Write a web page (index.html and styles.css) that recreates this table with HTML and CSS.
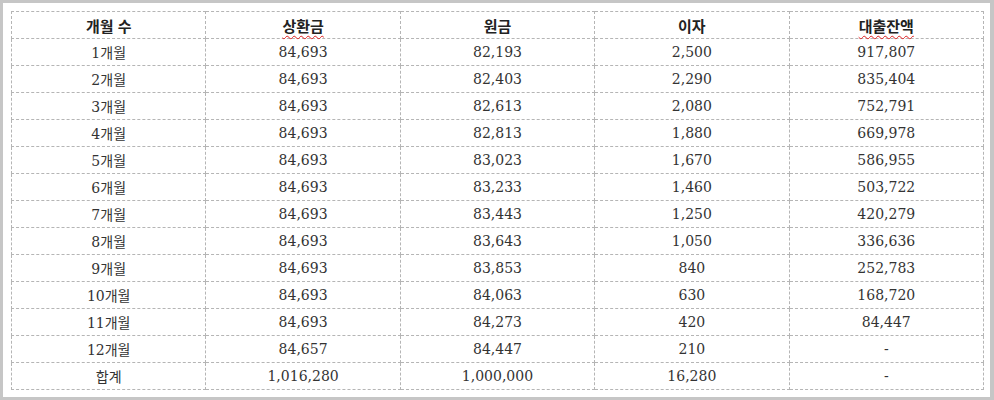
FILE: index.html
```html
<!DOCTYPE html>
<html lang="ko">
<head>
<meta charset="utf-8">
<link rel="stylesheet" href="styles.css">
</head>
<body>
<div class="frame">
<table class="loan">
<thead>
<tr><th>개월 수</th><th><span class="spell">상환금</span></th><th>원금</th><th>이자</th><th><span class="spell">대출잔액</span></th></tr>
</thead>
<tbody>
<tr><td>1개월</td><td>84,693</td><td>82,193</td><td>2,500</td><td>917,807</td></tr>
<tr><td>2개월</td><td>84,693</td><td>82,403</td><td>2,290</td><td>835,404</td></tr>
<tr><td>3개월</td><td>84,693</td><td>82,613</td><td>2,080</td><td>752,791</td></tr>
<tr><td>4개월</td><td>84,693</td><td>82,813</td><td>1,880</td><td>669,978</td></tr>
<tr><td>5개월</td><td>84,693</td><td>83,023</td><td>1,670</td><td>586,955</td></tr>
<tr><td>6개월</td><td>84,693</td><td>83,233</td><td>1,460</td><td>503,722</td></tr>
<tr><td>7개월</td><td>84,693</td><td>83,443</td><td>1,250</td><td>420,279</td></tr>
<tr><td>8개월</td><td>84,693</td><td>83,643</td><td>1,050</td><td>336,636</td></tr>
<tr><td>9개월</td><td>84,693</td><td>83,853</td><td>840</td><td>252,783</td></tr>
<tr><td>10개월</td><td>84,693</td><td>84,063</td><td>630</td><td>168,720</td></tr>
<tr><td>11개월</td><td>84,693</td><td>84,273</td><td>420</td><td>84,447</td></tr>
<tr><td>12개월</td><td>84,657</td><td>84,447</td><td>210</td><td>-</td></tr>
<tr><td>합계</td><td>1,016,280</td><td>1,000,000</td><td>16,280</td><td>-</td></tr>
</tbody>
</table>
</div>
</body>
</html>
```
FILE: styles.css
```css
html, body {
  margin: 0;
  padding: 0;
  background: #ffffff;
}
.frame {
  width: 994px;
  height: 400px;
  box-sizing: border-box;
  border: 3px solid #c6c6c6;
  border-right-width: 4px;
  padding: 8px 6px 8px 8px;
  background: #ffffff;
}
.loan {
  width: 973px;
  border-collapse: collapse;
  table-layout: fixed;
  font-family: "DejaVu Serif", "Noto Sans CJK KR", serif;
  font-variant-numeric: oldstyle-nums;
  font-size: 14px;
  color: #333333;
}
.loan th,
.loan td {
  border: 1px dashed #b5b5b5;
  height: 26px;
  padding: 0;
  text-align: center;
  vertical-align: middle;
}
.loan th {
  font-family: "Noto Sans CJK KR", sans-serif;
  font-weight: 700;
  font-size: 15px;
  color: #222222;
}
.spell {
  text-decoration: underline wavy #e02020;
  text-decoration-thickness: 1px;
  text-underline-offset: 3px;
}
```
